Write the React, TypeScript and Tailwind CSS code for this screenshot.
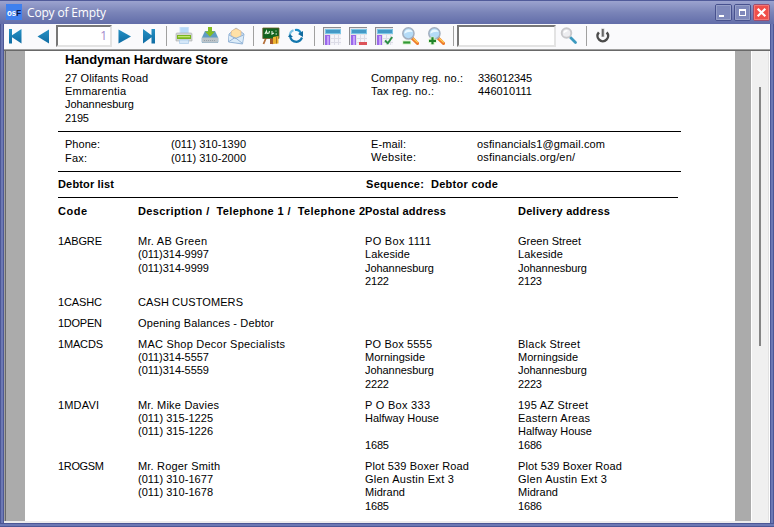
import { useLayoutEffect, useRef } from "react";
import type { ReactNode } from "react";

/* A single line of report text, tracked out to its printed width. */
function Fit({ w, children, className = "" }: { w: number; children: string; className?: string }) {
  const ref = useRef<HTMLSpanElement>(null);
  useLayoutEffect(() => {
    const el = ref.current;
    if (!el) return;
    el.style.letterSpacing = "0px";
    const natural = el.getBoundingClientRect().width;
    el.style.letterSpacing = `${(w - natural) / Math.max(1, children.length - 1)}px`;
  }, [w, children]);
  return (
    <div className={`whitespace-pre ${className}`}>
      <span ref={ref}>{children}</span>
    </div>
  );
}

type Line = [string, number];
type Row = { code: Line; desc: Line[]; postal: Line[]; delivery: Line[]; step?: number };

const rows: Row[] = [
  {
    code: ["1ABGRE", 44],
    step: 2,
    desc: [["Mr. AB Green", 69], ["(011)314-9997", 71], ["(011)314-9999", 71]],
    postal: [["PO Box 1111", 66], ["Lakeside", 45], ["Johannesburg", 69], ["2122", 24]],
    delivery: [["Green Street", 63], ["Lakeside", 45], ["Johannesburg", 69], ["2123", 24]],
  },
  { code: ["1CASHC", 44], desc: [["CASH CUSTOMERS", 105]], postal: [], delivery: [] },
  { code: ["1DOPEN", 44], desc: [["Opening Balances - Debtor", 136]], postal: [], delivery: [] },
  {
    code: ["1MACDS", 45],
    desc: [["MAC Shop Decor Specialists", 147], ["(011)314-5557", 71], ["(011)314-5559", 71]],
    postal: [["PO Box 5555", 67], ["Morningside", 60], ["Johannesburg", 69], ["2222", 24]],
    delivery: [["Black Street", 62], ["Morningside", 60], ["Johannesburg", 69], ["2223", 24]],
  },
  {
    code: ["1MDAVI", 41],
    desc: [["Mr. Mike Davies", 81], ["(011) 315-1225", 75], ["(011) 315-1226", 75]],
    postal: [["P O Box 333", 65], ["Halfway House", 74], [" ", 3], ["1685", 24]],
    delivery: [["195 AZ Street", 70], ["Eastern Areas", 72], ["Halfway House", 74], ["1686", 24]],
  },
  {
    code: ["1ROGSM", 46],
    desc: [["Mr. Roger Smith", 82], ["(011) 310-1677", 75], ["(011) 310-1678", 75]],
    postal: [["Plot 539 Boxer Road", 104], ["Glen Austin Ext 3", 89], ["Midrand", 40], ["1685", 24]],
    delivery: [["Plot 539 Boxer Road", 104], ["Glen Austin Ext 3", 89], ["Midrand", 40], ["1686", 24]],
  },
];

/* Lines sit 13px apart; the one at index `step` drops by a further pixel. */
function Lines({ items, step = 3 }: { items: Line[]; step?: number }) {
  return (
    <div>
      {items.map(([text, w], i) => (
        <Fit key={i} w={w} className={i === step ? "mt-px h-[13px]" : "h-[13px]"}>{text}</Fit>
      ))}
    </div>
  );
}

function Icon({ children, className = "" }: { children: ReactNode; className?: string }) {
  return (
    <svg viewBox="0 0 18 18" className={`h-[18px] w-[18px] shrink-0 ${className}`}>
      {children}
    </svg>
  );
}

function Divider({ className = "" }: { className?: string }) {
  return <div className={`h-[20px] w-px shrink-0 bg-[#a0a0a0] ${className}`} />;
}

function Arrow({ d, id }: { d: string; id: string }) {
  return (
    <>
      <defs>
        <linearGradient id={id} x1="0" y1="0" x2="0" y2="1">
          <stop offset="0" stopColor="#2590c4" />
          <stop offset="1" stopColor="#0f6ca3" />
        </linearGradient>
      </defs>
      <path d={d} fill={`url(#${id})`} />
    </>
  );
}

function TableBase() {
  return (
    <>
      <path d="M0 0H18V18H0Z" fill="#e4e4e8" />
      <path d="M0 18V0H18V1H1V18Z" fill="#8c8c90" />
      <path d="M2 2H18V7H2Z" fill="#7cc6e6" />
      <path d="M3 3H17V6H3Z" fill="#4499c6" />
      <path d="M2 8H7V18H2Z" fill="#9a68ea" />
      <path d="M4 9H6V18H4Z" fill="#c6a2fa" />
      <path d="M8 8H18V18H8Z" fill="#f4f4f9" />
      <path d="M8 11.5H18M8 15.5H18M11.5 8V18M15.5 8V18" stroke="#dcdce6" strokeWidth="1" />
    </>
  );
}

function Magnifier({ children }: { children?: ReactNode }) {
  return (
    <>
      <path d="M11 11L16.5 16.3" stroke="#ee7a2c" strokeWidth="3.2" strokeLinecap="round" />
      <path d="M12.2 11.4L16.8 15.5" stroke="#ffd45a" strokeWidth="1.2" />
      <circle cx="7.4" cy="6.4" r="5.6" fill="#b4dbf7" stroke="#a3afbf" strokeWidth="1.5" />
      <path d="M3.2 6.8Q3.8 2.6 7.8 2.5Q11 2.8 11.7 5Q7 4.3 3.2 6.8Z" fill="#eaf8ff" />
      {children}
    </>
  );
}

function Toolbar() {
  return (
    <div className="flex h-[25px] shrink-0 items-center bg-[#fafafc] pb-px">
      <Icon className="ml-[4px]">
        <Arrow id="first" d="M1 2H4V8.3L13.5 2V16.5L4 10.2V16.5H1Z" />
      </Icon>
      <Icon className="ml-[8px]"><Arrow id="prev" d="M15 2.5V16.5L3.5 9.5Z" /></Icon>
      <div className="ml-[4px] h-[22px] w-[56px] shrink-0 border-2 border-t-[#777] border-r-[#e3e3e3] border-b-[#e3e3e3] border-l-[#777] bg-white pr-[3px] text-right font-['Open_Sans',sans-serif] text-[12px] leading-[17px] text-[#a18acb]">1</div>
      <Icon className="ml-[3px]"><Arrow id="next" d="M3.5 2.5V16.5L16 9.5Z" /></Icon>
      <Icon className="ml-[9px]">
        <Arrow id="last" d="M1 2L9.5 8.3V2H13V16.5H9.5V10.2L1 16.5Z" />
      </Icon>
      <Divider className="ml-[6px]" />
      {/* Print */}
      <Icon className="ml-[8px]">
        <path d="M5 0H13.5V8H5Z" fill="#b8daf8" stroke="#cfe4f8" />
        <path d="M1 7Q1 6 2 6H16Q17 6 17 7V14H1Z" fill="#d3d6d6" stroke="#a9adab" strokeWidth=".6" />
        <path d="M2 8H16V12H2Z" fill="#79b51e" />
        <path d="M3 9H15V10.3H3Z" fill="#c4e671" />
        <path d="M4.5 13H13.5V16.5H4.5Z" fill="#d5e7f8" stroke="#a7c8e7" strokeWidth=".7" />
      </Icon>
      {/* Save */}
      <Icon className="ml-[8px]">
        <path d="M4 4H14L17.3 11V14.5Q17.3 16 16 16H2Q.7 16 .7 14.5V11Z" fill="#5d9cc4" />
        <path d="M1 10.5H17V14.5Q17 15.8 15.8 15.8H2.2Q1 15.8 1 14.5Z" fill="#bcc4ca" />
        <path d="M3 13.5H15" stroke="#98a2a9" strokeWidth="1" strokeDasharray="1 1" />
        <path d="M7 0H11V4.5H14L9 9.8L4 4.5H7Z" fill="#84bd22" />
      </Icon>
      {/* Mail */}
      <Icon className="ml-[8px]">
        <path d="M2 7L9 1L17 7L15.5 17L1.5 15Z" fill="#c3dcf2" stroke="#8caed2" strokeWidth=".9" />
        <path d="M4.5 4L9 1.5L14 4V10L9 12L4 8Z" fill="#ffe1a7" stroke="#e4b37e" strokeWidth=".6" />
        <path d="M2 8L8.5 11.5L16.5 8L15 16L2 14.5Z" fill="#dcecf9" />
        <path d="M2 14.5L8 10.5L15 16M2 8L8.5 11.5L16.5 8" fill="none" stroke="#8caed2" strokeWidth=".9" />
      </Icon>
      <Divider className="ml-[8px]" />
      {/* Report designer */}
      <Icon className="ml-[8px]">
        <path d="M4 11L1.5 17M10 11L11 17" stroke="#b5713c" strokeWidth="1.8" />
        <path d="M.8 1H17V11.5H.8Z" fill="#12641f" stroke="#6c5a26" strokeWidth=".8" />
        <path d="M3 7L4.5 4L5 6.5L7 6L7.5 4M10 4V7L12 6M13.5 4H14.5M13.5 7H15" fill="none" stroke="#e3f4de" strokeWidth="1.1" />
        <path d="M8 12H12V17H8Z" fill="#a8592b" />
        <path d="M11 10L16.5 9V16.5L11 17Z" fill="#edb32e" />
        <path d="M14.5 10V16.5" stroke="#a57220" />
      </Icon>
      {/* Refresh */}
      <Icon className="ml-[7px]">
        <path d="M8 3Q12.8 2.2 14 7" fill="none" stroke="#1a8cc6" strokeWidth="2.2" />
        <path d="M2.8 9.5Q2.6 4.5 6.5 3.3" fill="none" stroke="#7dc3e5" strokeWidth="2.2" />
        <path d="M3 9Q4 14.8 9.5 14.8Q13.5 14.4 15 10.5" fill="none" stroke="#1377ad" strokeWidth="2.2" />
        <path d="M11 7L16 4V10ZM1 10L3 7L6 10Z" fill="#126b9f" />
      </Icon>
      <Divider className="ml-[9px]" />
      <Icon className="ml-[8px]"><TableBase /></Icon>
      <Icon className="ml-[8px]">
        <TableBase />
        <path d="M10 15H18V18H10Z" fill="#dc5359" />
      </Icon>
      <Icon className="ml-[8px]">
        <TableBase />
        <path d="M10 13.5L12.8 16.2L17.2 10" fill="none" stroke="#2c8f45" strokeWidth="1.9" />
      </Icon>
      <Icon className="ml-[8px]">
        <Magnifier />
        <path d="M1.5 15.5H10" stroke="#d9f2ca" strokeWidth="4" />
        <path d="M2.2 15.5H9.3" stroke="#329934" strokeWidth="2.2" />
      </Icon>
      <Icon className="ml-[8px]">
        <Magnifier />
        <path d="M5.5 9.8V17.8M1.5 13.8H9.5" stroke="#d9f2ca" strokeWidth="4.2" />
        <path d="M5.5 10.3V17.3M2 13.8H9" stroke="#21852b" strokeWidth="2.2" />
      </Icon>
      <Divider className="ml-[8px]" />
      <div className="ml-[3px] h-[22px] w-[99px] shrink-0 border-2 border-t-[#777] border-r-[#e3e3e3] border-b-[#e3e3e3] border-l-[#777] bg-white" />
      {/* Search */}
      <Icon className="ml-[4px]">
        <path d="M10.5 10.5L15.5 15.5" stroke="#3c99bf" strokeWidth="2.8" strokeLinecap="round" />
        <circle cx="6.5" cy="6" r="4.8" fill="#ededf0" stroke="#c8c8cb" strokeWidth="1.9" />
        <path d="M4 5.7Q5 3.4 7.5 3.7" fill="none" stroke="#fff" strokeWidth="1.5" />
      </Icon>
      <Divider className="ml-[8px]" />
      {/* Close */}
      <Icon className="ml-[7px]">
        <path d="M4.9 5.3A5.3 5.3 0 1 0 12.7 5.3" fill="none" stroke="#4b4b4b" strokeWidth="2.5" />
        <path d="M8.8 1.5V10" stroke="#c4c4c4" strokeWidth="3.2" />
        <path d="M8.8 2V9.5" stroke="#666" strokeWidth="1.8" />
      </Icon>
    </div>
  );
}

function WindowButton({ fill, edge, rim, children }: { fill: string; edge: string; rim: string; children: ReactNode }) {
  return (
    <svg viewBox="0 0 17 17" className="h-[17px] w-[17px]">
      <rect x=".5" y=".5" width="16" height="16" rx="1.5" fill={fill} stroke={edge} />
      <rect x="1.5" y="1.5" width="14" height="14" fill="none" stroke={rim} strokeOpacity=".65" />
      {children}
    </svg>
  );
}

function TitleBar() {
  return (
    <div className="flex h-[24px] shrink-0 items-start border-t border-[#515b9a] bg-linear-to-b from-[#9ca3cf] via-[#7a84b8] to-[#626da9] pr-[4px] pl-[6px]">
      <svg viewBox="0 0 16 16" className="mt-[3px] h-[16px] w-[16px] shrink-0 font-['Liberation_Sans',sans-serif] font-bold">
        <path d="M0 0H16V16H0Z" fill="#3f80ee" />
        <text x="1" y="11.5" fontSize="9.5" textLength="14" lengthAdjust="spacingAndGlyphs" fill="#fff">
          os<tspan fill="#0d1740">F</tspan>
        </text>
      </svg>
      <Fit w={79} className="mt-[1.5px] ml-[5px] font-['Open_Sans',sans-serif] text-[12px] leading-[20px] text-white">Copy of Empty</Fit>
      <div className="mt-[3px] ml-auto flex gap-[2px]">
        <WindowButton fill="#7f89bb" edge="#47518e" rim="#a3aad0">
          <path d="M4 11H9V13H4Z" fill="#fff" />
        </WindowButton>
        <WindowButton fill="#7f89bb" edge="#47518e" rim="#a3aad0">
          <path d="M5 5H12V12H5ZM6 7V11H11V7Z" fillRule="evenodd" fill="#fff" />
        </WindowButton>
        <WindowButton fill="#f14f4a" edge="#9d4d70" rim="#f68e8a">
          <path d="M4.7 4.7L12.3 12.3M12.3 4.7L4.7 12.3" stroke="#fff" strokeWidth="2.2" />
        </WindowButton>
      </div>
    </div>
  );
}

function Report() {
  return (
    <div className="h-full w-[710px] shrink-0 overflow-hidden bg-white pl-[33px]">
      <div className="h-[80px] pl-[7px]">
        <Fit w={163} className="text-[13px] leading-[17px] font-bold">Handyman Hardware Store</Fit>
        <div className="mt-[4px] grid grid-cols-[306px_107px_1fr]">
          <Lines items={[["27 Olifants Road", 83], ["Emmarentia", 61], ["Johannesburg", 69], ["2195", 24]]} />
          <Lines items={[["Company reg. no.:", 92], ["Tax reg. no.:", 63]]} />
          <Lines items={[["336012345", 54], ["446010111", 54]]} />
        </div>
      </div>
      <div className="h-px w-[623px] bg-black" />
      <div className="grid h-[39px] grid-cols-[106px_200px_106px_1fr] pt-[6px] pl-[7px]">
        <Lines step={1} items={[["Phone:", 35], ["Fax:", 22]]} />
        <Lines step={1} items={[["(011) 310-1390", 75], ["(011) 310-2000", 75]]} />
        <Lines items={[["E-mail:", 35], ["Website:", 45]]} />
        <Lines items={[["osfinancials1@gmail.com", 128], ["osfinancials.org/en/", 98]]} />
      </div>
      <div className="h-px w-[623px] bg-black" />
      <div className="grid h-[25px] grid-cols-[308px_1fr] pt-[6px] font-bold">
        <Fit w={56}>Debtor list</Fit>
        <Fit w={132}>Sequence:  Debtor code</Fit>
      </div>
      <div className="h-px w-[620px] bg-black" />
      <div className="grid h-[26px] grid-cols-[80px_227px_153px_1fr] pt-[7px] font-bold">
        <Fit w={29}>Code</Fit>
        <Fit w={227}>Description /  Telephone 1 /  Telephone 2</Fit>
        <Fit w={81}>Postal address</Fit>
        <Fit w={92}>Delivery address</Fit>
      </div>
      <div className="mt-[11px] flex flex-col gap-[8px]">
        {rows.map((r) => (
          <div key={r.code[0]} className="grid grid-cols-[80px_227px_153px_1fr]">
            <Lines items={[r.code]} />
            <Lines items={r.desc} step={r.step} />
            <Lines items={r.postal} step={r.step} />
            <Lines items={r.delivery} step={r.step} />
          </div>
        ))}
      </div>
    </div>
  );
}

export default function App() {
  return (
    <div className="flex h-[527px] w-[774px] flex-col overflow-hidden bg-[#5e6aa8]">
      <TitleBar />
      <div className="flex min-h-0 flex-1">
        <div className="w-[4px] shrink-0 border-x border-[#4c5796] bg-[#6c78b4]" />
        <div className="flex w-[766px] shrink-0 flex-col bg-white">
          <Toolbar />
          <div className="h-[2px] shrink-0 border-t border-[#a0a0a0] bg-[#696969]" />
          <div className="flex min-h-0 flex-1 border-b-2 border-[#ececec] font-['Liberation_Sans',Arial,sans-serif] text-[11px] leading-[12px] text-black">
            <div className="w-[2px] shrink-0 border-l border-[#a0a0a0] bg-[#696969]" />
            <div className="w-[19px] shrink-0 bg-[#ababab]" />
            <Report />
            <div className="w-[16px] shrink-0 bg-[#ababab]" />
            <div className="ml-px w-[17px] shrink-0 border-r border-[#e2e2e2] bg-[#f0f0f0] pt-[36px] pl-[7px]">
              <div className="h-[259px] w-[2px] bg-[#858585]" />
            </div>
          </div>
        </div>
        <div className="w-[4px] shrink-0 border-x border-[#4c5796] bg-[#6c78b4]" />
      </div>
      <div className="h-[4px] shrink-0 border-y border-[#4c5796] bg-[#6c78b4]" />
    </div>
  );
}
